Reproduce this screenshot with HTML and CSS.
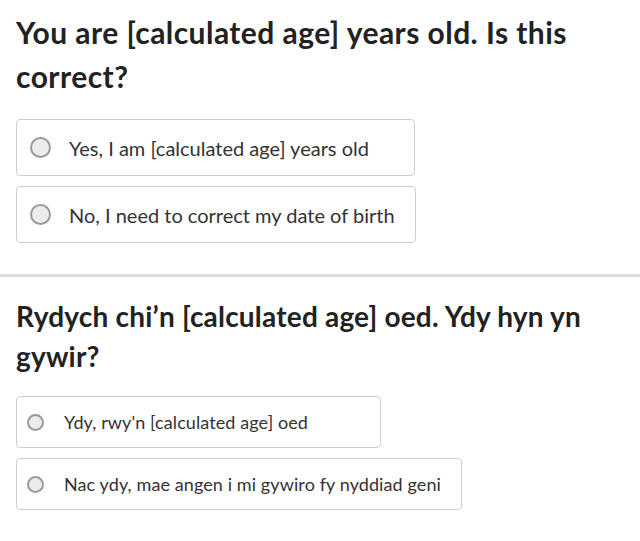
FILE: index.html
```html
<!DOCTYPE html>
<html lang="en">
<head>
    <meta charset="UTF-8">
    <meta name="viewport" content="width=device-width, initial-scale=1.0">
    <title>Age check</title>
    <link rel="stylesheet" href="styles.css">
</head>
<body>
    <div class="question">
        <h1>You are [calculated age] years old. Is this correct?</h1>
        <div class="options">
            <label class="option">
                <input type="radio" name="age-en" value="yes">
                <span>Yes, I am [calculated age] years old</span>
            </label>
            <label class="option">
                <input type="radio" name="age-en" value="no">
                <span>No, I need to correct my date of birth</span>
            </label>
        </div>
    </div>

    <hr class="divider">

    <div class="question welsh">
        <h1>Rydych chi’n [calculated age] oed. Ydy hyn yn gywir?</h1>
        <div class="options">
            <label class="option">
                <input type="radio" name="age-cy" value="yes">
                <span>Ydy, rwy'n [calculated age] oed</span>
            </label>
            <label class="option">
                <input type="radio" name="age-cy" value="no">
                <span>Nac ydy, mae angen i mi gywiro fy nyddiad geni</span>
            </label>
        </div>
    </div>
</body>
</html>
```

FILE: styles.css
```css
body {
    font-family: Lato, "Open Sans", sans-serif;
    background-color: #fff;
    color: #222;
    margin: 0;
    padding: 0;
}
.question {
    padding: 10px 16px 0 16px;
}
h1 {
    font-size: 30px;
    line-height: 44px;
    letter-spacing: 0.45px;
    font-weight: 700;
    margin: 0 0 21px 0;
    max-width: 590px;
}
.options {
    display: flex;
    flex-direction: column;
    gap: 10px;
}
.option {
    display: flex;
    align-items: center;
    box-sizing: border-box;
    width: fit-content;
    min-width: 399px;
    height: 57px;
    padding: 0 20px 0 13px;
    border: 1px solid #cfcfcf;
    border-radius: 4px;
    font-size: 20px;
    color: #333;
    cursor: pointer;
}
.option input[type="radio"] {
    appearance: none;
    -webkit-appearance: none;
    box-sizing: border-box;
    width: 21px;
    height: 21px;
    margin: 0 18px 0 0;
    border: 2px solid #9a9a9a;
    border-radius: 50%;
    background-color: #ececec;
    flex-shrink: 0;
}
.divider {
    border: none;
    height: 3px;
    background-color: #dcdcdc;
    margin: 31px 0 0 0;
}

/* welsh block is a bit smaller */
.welsh {
    padding-top: 19px;
}
.welsh h1 {
    font-size: 28px;
    line-height: 40px;
    letter-spacing: 0.2px;
    margin-bottom: 20px;
}
.welsh .options {
    gap: 10px;
}
.welsh .option {
    min-width: 365px;
    height: 52px;
    padding: 0 20px 0 10px;
    font-size: 18px;
    letter-spacing: 0.1px;
}
.welsh .option input[type="radio"] {
    width: 17px;
    height: 17px;
    margin-right: 20px;
}
```
